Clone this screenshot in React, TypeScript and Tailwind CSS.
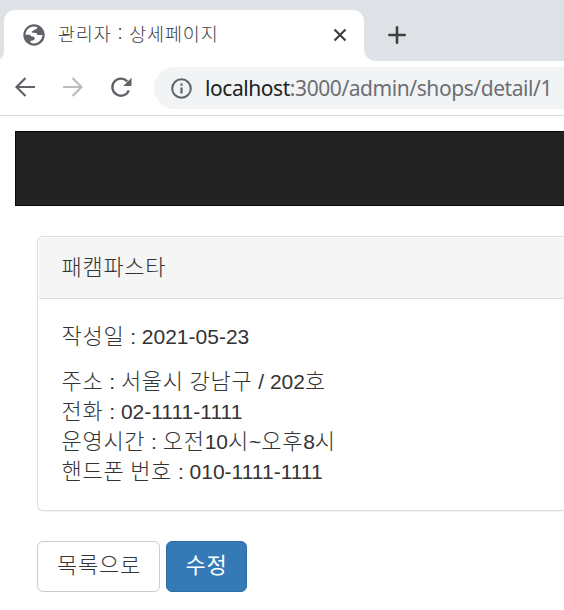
import type { ReactNode } from "react";

const koFont = "font-['Noto_Sans_CJK_KR',sans-serif]";

function Ko({ children }: { children: ReactNode }) {
  return (
    <span lang="ko" className={`${koFont} text-[22px] leading-[0px] tracking-[0.7px]`}>
      {children}
    </span>
  );
}

function Globe() {
  return (
    <svg viewBox="0 0 22 22" className="mb-px h-[22px] w-[22px] shrink-0">
      <circle cx="11" cy="11" r="10.700" fill="#5f6368" />
      <path
        d="M2.600 10.800C2.700 6.500 6.200 2.700 10.800 2.600c1.300 0 2.500.2 3.600.7-.1 1.300-.9 2-2.100 2.300-1.500.3-1.700 1.300-3.100 1.700-.7.3-.7 1.300.2 1.500h2.400c1.500 0 2.200.8 2.500 2.200h5.100c0 4.300-3.600 8.300-8.300 8.400-1.200 0-2.300-.2-3.400-.7v-2c2.200.2 3.800-.5 4-2.200.1-1.200-.7-1.800-1.900-1.900-1.600-.1-2.400-.6-2.600-1.800z"
        fill="#fff"
      />
    </svg>
  );
}

function TabStrip() {
  return (
    <div className="flex h-[61px] bg-[#dee1e6] pt-[10px]">
      <div className="flex w-1 items-start overflow-hidden bg-white">
        <div className="h-[49px] w-1 rounded-br-[4px_10px] bg-[#dee1e6]" />
      </div>
      <div className="flex w-[360px] shrink-0 items-center rounded-t-[11px] bg-white pr-[17px] pl-[19px]">
        <Globe />
        <span
          lang="ko"
          className={`${koFont} ml-[13px] grow pb-[6px] text-[18.5px] leading-[24px] font-light tracking-[0.85px] whitespace-pre text-[#3c4043]`}
        >
          관리자 : 상세페이지
        </span>
        <svg viewBox="0 0 14 14" className="mb-px h-[14px] w-[14px]" stroke="#3c4043" strokeWidth="2.2">
          <path d="M1.500 1.500l11 11M12.500 1.500l-11 11" />
        </svg>
      </div>
      <div className="grow bg-white">
        <div className="h-[51px] rounded-bl-[12px] bg-[#dee1e6] pt-[16px] pl-[24px]">
          <svg viewBox="0 0 18 18" className="h-[18px] w-[18px]" stroke="#3c4043" strokeWidth="2.6" strokeLinecap="round">
            <path d="M9 1.300v15.400M1.300 9h15.400" />
          </svg>
        </div>
      </div>
    </div>
  );
}

function Toolbar() {
  return (
    <div className="flex h-[55px] border-b border-[#dadce0] pt-[6px] pl-[15px]">
      <svg viewBox="0 0 20 20" className="mt-[10px] h-[20px] w-[20px] shrink-0" fill="none" stroke="#5f6368" strokeWidth="2.200">
        <path d="M20 10H2M10.500 1L1.500 10l9 9" />
      </svg>
      <svg viewBox="0 0 20 20" className="mt-[10px] ml-[28px] h-[20px] w-[20px] shrink-0" fill="none" stroke="#babcbe" strokeWidth="2.200">
        <path d="M0 10h18M9.500 1l9 9-9 9" />
      </svg>
      <svg viewBox="0 0 22 22" className="mt-[10px] ml-[27px] h-[22px] w-[22px] shrink-0" fill="none">
        <path d="M18.800 13.300A8.500 8.500 0 1 1 17.200 4.500" stroke="#5f6368" strokeWidth="2.300" />
        <path d="M21.500 .800v8.200h-8.200z" fill="#5f6368" />
      </svg>
      <div className="ml-[22px] flex h-[42px] grow items-center rounded-l-full bg-[#f1f3f4] pl-[17px]">
        <svg viewBox="0 0 21 21" className="h-[21px] w-[21px] shrink-0" fill="none" stroke="#5f6368" strokeWidth="2">
          <circle cx="10.500" cy="10.500" r="9.300" />
          <path d="M10.500 9.500v6M10.500 5.500v2.200" strokeWidth="2.200" />
        </svg>
        <span className="ml-[13px] font-['Noto_Sans',sans-serif] text-[21px] leading-[30px] font-normal tracking-[-0.43px] whitespace-nowrap text-[#6b6f74]">
          <span className="text-[#202124]">localhost</span>:3000/admin/shops/detail/1
        </span>
      </div>
    </div>
  );
}

export default function App() {
  return (
    <div className="h-[610px] w-[564px] overflow-hidden bg-white font-['Liberation_Sans','Noto_Sans_CJK_KR',sans-serif] text-[21px] leading-[30px] font-light text-[#333]">
      <TabStrip />
      <Toolbar />
      <nav className="mt-[15px] ml-[15px] h-[75px] border border-r-0 border-[#080808] bg-[#222]" />
      <main className="pt-[30px] pl-[37px]">
        <section className="h-[275px] rounded-l-[6px] border border-r-0 border-[#ddd] pt-px pl-px shadow-[0_1px_1px_rgba(0,0,0,0.05)]">
          <header className="h-[61px] rounded-tl-[4px] border-b border-[#ddd] bg-[#f5f5f5] pt-[15px] pl-[22.500px]">
            <Ko>패캠파스타</Ko>
          </header>
          <div className="pt-[23px] pl-[22.500px] whitespace-nowrap">
            <p className="mb-[15px]">
              <Ko>작성일</Ko> : 2021-05-23
            </p>
            <p>
              <Ko>주소</Ko> : <Ko>서울시</Ko> <Ko>강남구</Ko> / 202<Ko>호</Ko>
            </p>
            <p>
              <Ko>전화</Ko> : 02-1111-1111
            </p>
            <p>
              <Ko>운영시간</Ko> : <Ko>오전</Ko>10<Ko>시</Ko>~<Ko>오후</Ko>8<Ko>시</Ko>
            </p>
            <p>
              <Ko>핸드폰</Ko> <Ko>번호</Ko> : 010-1111-1111
            </p>
          </div>
        </section>
        <div className="mt-[30px] flex gap-[6px]">
          <button className="h-[51px] w-[123px] rounded-[6px] border border-[#ccc] bg-white pb-px pl-px">
            <Ko>목록으로</Ko>
          </button>
          <button className="h-[51px] w-[81px] rounded-[6px] border border-[#2e6da4] bg-[#337ab7] pb-px font-normal text-white">
            <Ko>수정</Ko>
          </button>
        </div>
      </main>
    </div>
  );
}
